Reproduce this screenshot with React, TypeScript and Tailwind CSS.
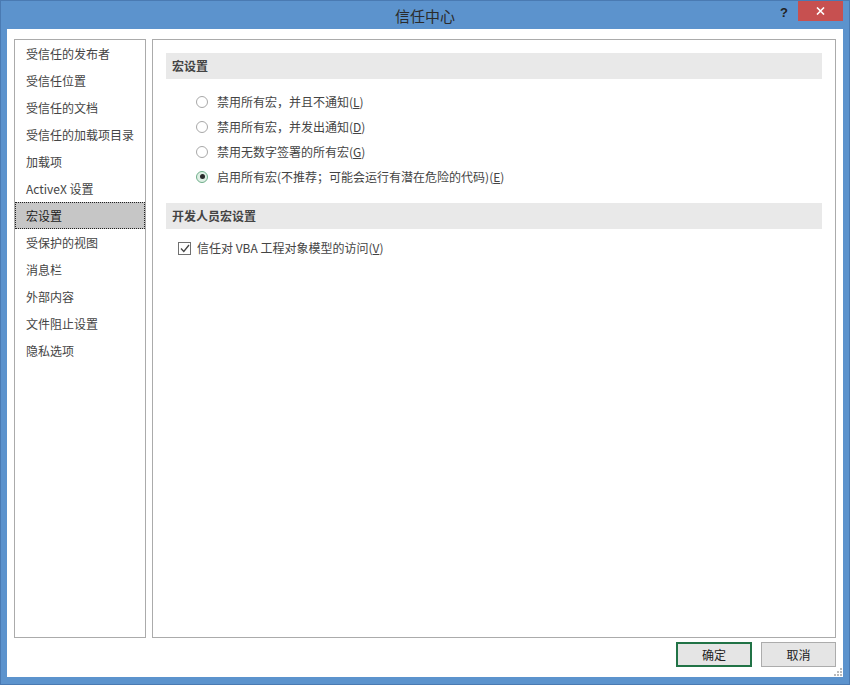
import React, { useState } from 'react';

const font = { fontFamily: '"Microsoft YaHei", "Noto Sans CJK SC", "Noto Sans", sans-serif' };

const navItems = [
  '受信任的发布者',
  '受信任位置',
  '受信任的文档',
  '受信任的加载项目录',
  '加载项',
  'ActiveX 设置',
  '宏设置',
  '受保护的视图',
  '消息栏',
  '外部内容',
  '文件阻止设置',
  '隐私选项',
];

const macroOptions = [
  { label: '禁用所有宏，并且不通知', key: 'L' },
  { label: '禁用所有宏，并发出通知', key: 'D' },
  { label: '禁用无数字签署的所有宏', key: 'G' },
  { label: '启用所有宏(不推荐；可能会运行有潜在危险的代码)', key: 'E' },
];

const Radio: React.FC<{ checked: boolean }> = ({ checked }) => (
  <span
    className={`flex items-center justify-center w-[12px] h-[12px] rounded-full border ${
      checked ? 'border-[#6fae8a] bg-[#dff0e5]' : 'border-[#a8a8a8] bg-white'
    }`}
  >
    {checked && <span className="w-[5px] h-[5px] rounded-full bg-[#2b2b2b]" />}
  </span>
);

const App: React.FC = () => {
  const [selected, setSelected] = useState(3);
  const [trustVba, setTrustVba] = useState(true);
  const activeNav = 6;

  return (
    <div className="w-[850px] h-[685px] bg-[#5c93cd] border border-[#4a7ab2] flex flex-col text-[#444]" style={font}>
      {/* title bar */}
      <div className="h-[29px] flex items-center relative">
        <div className="flex-1 text-center text-[15px] text-[#2b2b2b] pt-[2px]">信任中心</div>
        <div className="absolute right-[6px] top-0 flex items-start">
          <span className="text-[13px] font-bold text-[#222] mr-[10px] mt-[2px]" style={{ fontFamily: 'Arial, "Liberation Sans", sans-serif' }}>?</span>
          <div className="w-[45px] h-[20px] bg-[#c75050] flex items-center justify-center">
            <svg width="9" height="8" viewBox="0 0 9 8">
              <path d="M1 0.5 L8 7.5 M8 0.5 L1 7.5" stroke="#fff" strokeWidth="1.6" />
            </svg>
          </div>
        </div>
      </div>

      {/* body */}
      <div className="flex-1 bg-white mx-[6px] mb-[7px] flex flex-col pt-[10px] pl-[7px] pr-[7px] pb-[10px] relative">
        <div className="flex gap-[6px] h-[599px]">
          {/* nav */}
          <div className="w-[132px] border border-[#ababab]">
            {navItems.map((item, i) => (
              <div
                key={item}
                className={`h-[27px] flex items-center pl-[11px] text-[12px] ${
                  i === activeNav ? 'bg-[#c6c6c6] outline outline-1 outline-dotted outline-[#222] -outline-offset-1 text-[#222]' : 'text-[#444]'
                }`}
              >
                {item}
              </div>
            ))}
          </div>

          {/* content */}
          <div className="flex-1 border border-[#ababab] px-[13px] pt-[13px]">
            <div className="h-[26px] bg-[#e9e9e9] flex items-center pl-[6px] text-[12px] font-semibold text-[#444]">宏设置</div>
            <div className="mt-[10px] pl-[30px]">
              {macroOptions.map((opt, i) => (
                <div
                  key={opt.key}
                  className="h-[25px] flex items-center gap-[9px] text-[12px] cursor-default"
                  onClick={() => setSelected(i)}
                >
                  <Radio checked={selected === i} />
                  <span>
                    {opt.label}(<u>{opt.key}</u>)
                  </span>
                </div>
              ))}
            </div>
            <div className="mt-[14px] h-[26px] bg-[#e9e9e9] flex items-center pl-[6px] text-[12px] font-semibold text-[#444]">开发人员宏设置</div>
            <div className="mt-[7px] h-[24px] flex items-center pl-[12px] gap-[6px] text-[12px]" onClick={() => setTrustVba(!trustVba)}>
              <span className="w-[13px] h-[13px] border border-[#707070] bg-white flex items-center justify-center">
                {trustVba && (
                  <svg width="10" height="9" viewBox="0 0 10 9">
                    <path d="M1 4.5 L3.8 7.5 L9 1" stroke="#444" strokeWidth="1.3" fill="none" />
                  </svg>
                )}
              </span>
              <span>
                信任对 VBA 工程对象模型的访问(<u>V</u>)
              </span>
            </div>
          </div>
        </div>

        {/* buttons */}
        <div className="flex justify-end gap-[9px] mt-[4px]">
          <button className="w-[76px] h-[25px] border-2 border-[#217346] bg-[#e5e5e5] text-[12px] text-[#222]">确定</button>
          <button className="w-[75px] h-[25px] border border-[#acacac] bg-[#e5e5e5] text-[12px] text-[#222]">取消</button>
        </div>

        {/* resize grip */}
        <svg className="absolute right-[1px] bottom-[1px]" width="8" height="8" viewBox="0 0 8 8">
          <rect x="6" y="0" width="2" height="2" fill="#bbb" />
          <rect x="3" y="3" width="2" height="2" fill="#bbb" />
          <rect x="6" y="3" width="2" height="2" fill="#bbb" />
          <rect x="0" y="6" width="2" height="2" fill="#bbb" />
          <rect x="3" y="6" width="2" height="2" fill="#bbb" />
          <rect x="6" y="6" width="2" height="2" fill="#bbb" />
        </svg>
      </div>
    </div>
  );
};

export default App;
